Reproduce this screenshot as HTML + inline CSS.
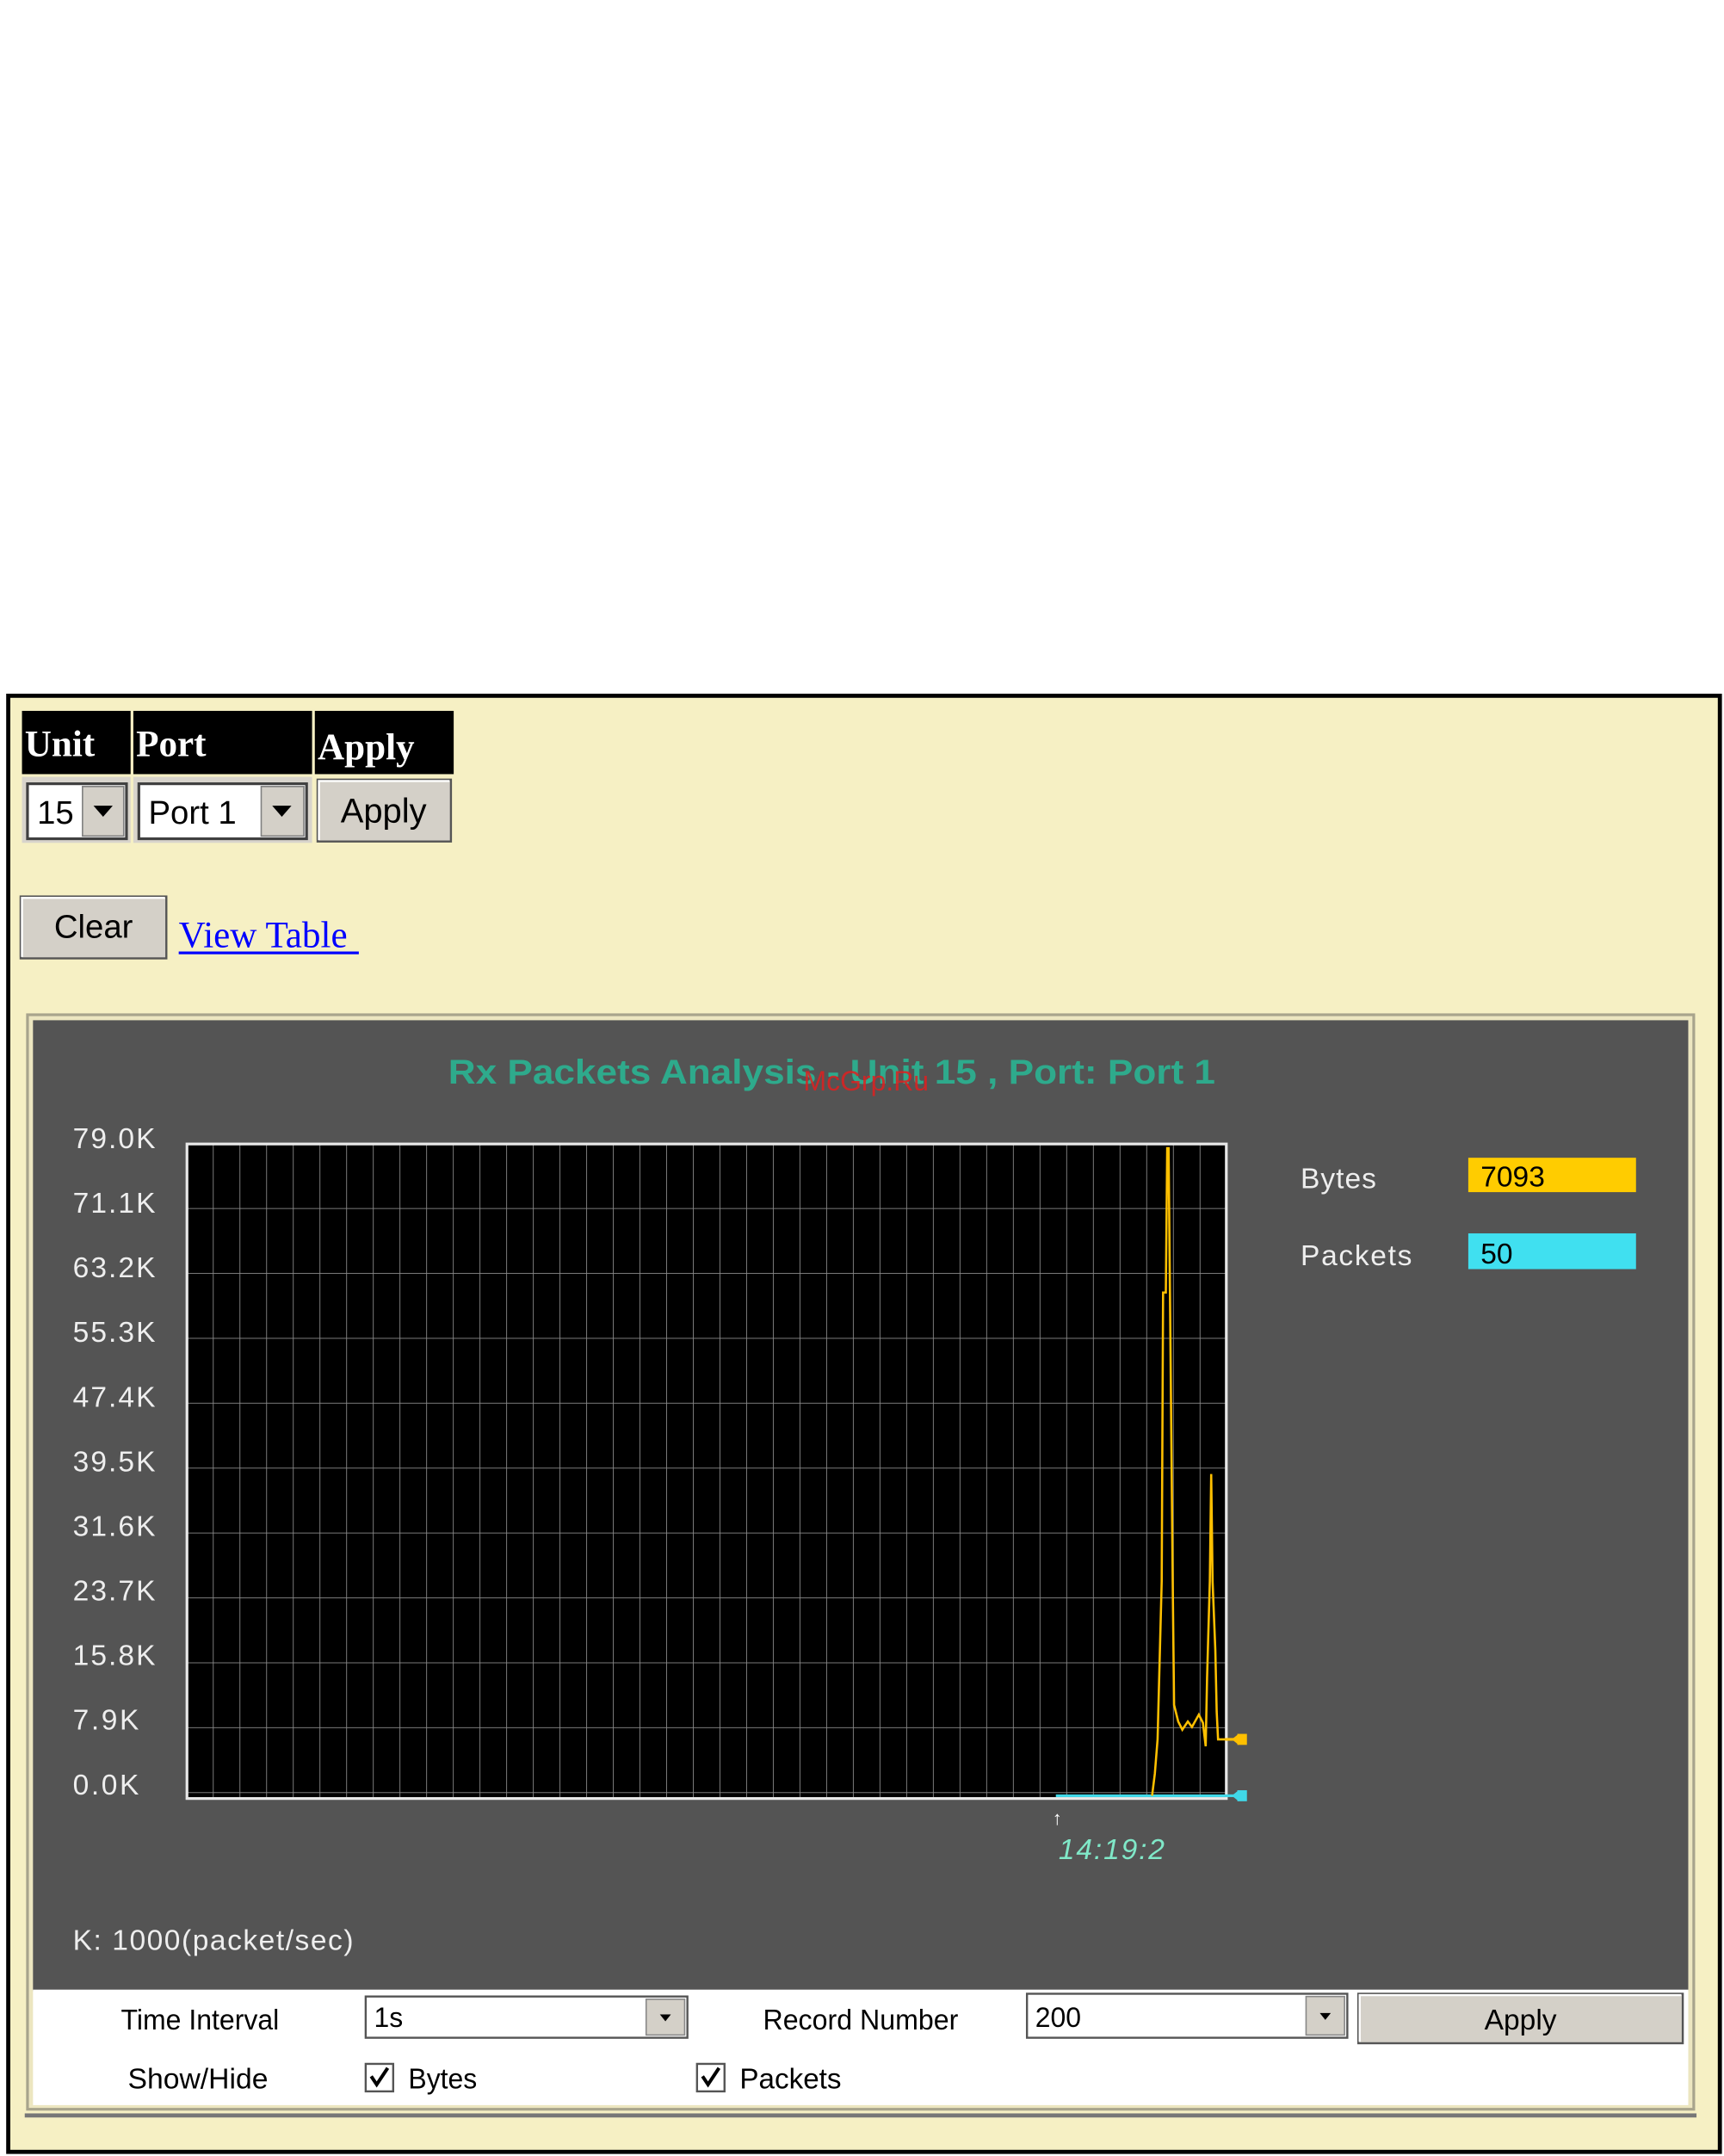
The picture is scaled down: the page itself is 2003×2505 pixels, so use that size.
<!DOCTYPE html>
<html><head><meta charset="utf-8"><style>
html,body{margin:0;padding:0;background:#fff;}
svg{display:block;}
</style></head><body>
<svg width="2003" height="2505" viewBox="0 0 1254 1568" preserveAspectRatio="none" xmlns="http://www.w3.org/2000/svg">
<defs>
<pattern id="grid" x="136" y="832" width="19.4" height="47.2" patternUnits="userSpaceOnUse">
<path d="M19.4 0V47.2M0 47.2H19.4" stroke="#8a8a8a" stroke-width="1.1" fill="none"/>
</pattern>
</defs>
<rect width="1254" height="1568" fill="#fff"/>
<rect x="6" y="506" width="1245" height="1059" fill="#f6f0c4" stroke="#000" stroke-width="3"/>
<rect x="16" y="517" width="79" height="46" fill="#000"/>
<rect x="97" y="517" width="130" height="46" fill="#000"/>
<rect x="229" y="517" width="101" height="46" fill="#000"/>
<g font-family="Liberation Serif, serif" font-weight="bold" font-size="27" fill="#fff">
<text x="18" y="550">Unit</text><text x="99" y="550">Port</text><text x="231" y="552">Apply</text>
</g>
<rect x="16" y="565" width="79" height="48" fill="#d8d4cc"/>
<rect x="97" y="565" width="130" height="48" fill="#d8d4cc"/>
<rect x="20" y="570" width="72" height="40" fill="#fff" stroke="#404040" stroke-width="2"/>
<rect x="60" y="572" width="30" height="36" fill="#d4d0c8" stroke="#808080"/>
<path d="M68 586h14l-7 8z" fill="#000"/>
<text x="27" y="599" font-family="Liberation Sans, sans-serif" font-size="24">15</text>
<rect x="101" y="570" width="122" height="40" fill="#fff" stroke="#404040" stroke-width="2"/>
<rect x="190" y="572" width="31" height="36" fill="#d4d0c8" stroke="#808080"/>
<path d="M198 586h14l-7 8z" fill="#000"/>
<text x="108" y="599" font-family="Liberation Sans, sans-serif" font-size="24">Port 1</text>
<rect x="231" y="567" width="97" height="45" fill="#d4d0c8" stroke="#555" stroke-width="1.5"/>
<path d="M232 611V568H327" stroke="#fff" fill="none" stroke-width="1.5"/>
<text x="279" y="598" text-anchor="middle" font-family="Liberation Sans, sans-serif" font-size="25">Apply</text>
<rect x="15" y="652" width="106" height="45" fill="#d4d0c8" stroke="#555" stroke-width="1.5"/>
<path d="M16 696V653H120" stroke="#fff" fill="none" stroke-width="1.5"/>
<text x="68" y="682" text-anchor="middle" font-family="Liberation Sans, sans-serif" font-size="24">Clear</text>
<text x="130" y="689" font-family="Liberation Serif, serif" font-size="27" fill="#0000ff">View Table</text>
<rect x="130" y="692" width="131" height="2" fill="#0000ff"/>
<rect x="20" y="738" width="1212" height="796" fill="#ece6c0" stroke="#a8a48c" stroke-width="2"/>
<rect x="24" y="742" width="1204" height="706" fill="#545454"/>
<rect x="24" y="1447" width="1204" height="84" fill="#fff"/>
<rect x="18" y="1537" width="1216" height="3" fill="#777"/>
<text x="326" y="788" textLength="558" lengthAdjust="spacingAndGlyphs" font-family="Liberation Sans, sans-serif" font-weight="bold" font-size="25" fill="#2eaa8c">Rx Packets Analysis - Unit 15 , Port: Port 1</text>
<text x="630" y="793" text-anchor="middle" font-family="Liberation Sans, sans-serif" font-size="20" fill="#e02020" opacity="0.85">McGrp.Ru</text>
<rect x="136" y="832" width="756" height="476" fill="#000"/>
<rect x="136" y="832" width="756" height="476" fill="url(#grid)"/>
<rect x="136" y="832" width="756" height="476" fill="none" stroke="#e8e8e8" stroke-width="2"/>
<g font-family="Liberation Sans, sans-serif" font-size="21" fill="#eee">
<g textLength="60" lengthAdjust="spacingAndGlyphs">
<text x="53" y="835" textLength="60">79.0K</text><text x="53" y="882" textLength="60">71.1K</text><text x="53" y="929" textLength="60">63.2K</text>
<text x="53" y="976" textLength="60">55.3K</text><text x="53" y="1023" textLength="60">47.4K</text><text x="53" y="1070" textLength="60">39.5K</text>
<text x="53" y="1117" textLength="60">31.6K</text><text x="53" y="1164" textLength="60">23.7K</text><text x="53" y="1211" textLength="60">15.8K</text>
<text x="53" y="1258" textLength="48">7.9K</text><text x="53" y="1305" textLength="48">0.0K</text>
</g>
<text x="53" y="1418" textLength="204">K: 1000(packet/sec)</text>
<text x="946" y="864" textLength="55">Bytes</text><text x="946" y="920" textLength="81">Packets</text>
</g>
<path d="M768 1306H891" stroke="#40d8e8" stroke-width="2" fill="none"/>
<path d="M838 1306L840 1290L842 1265L845 1150L846 940L848 940L849 835L850 835L851 940L853 1150L854 1240L857 1252L860 1258L864 1252L867 1256L872 1247L875 1253L877 1270L878 1220L880 1150L881 1072L882 1150L884 1200L885 1245L886 1265L891 1265" stroke="#ffc000" stroke-width="1.6" fill="none"/>
<path d="M891 1265H900" stroke="#ffc000" stroke-width="2"/><rect x="900" y="1261" width="7" height="8" fill="#ffc000"/><path d="M896 1265l5-4v8z" fill="#ffc000"/>
<path d="M891 1306H900" stroke="#40d8e8" stroke-width="2"/><rect x="900" y="1302" width="7" height="8" fill="#40d8e8"/><path d="M896 1306l5-4v8z" fill="#40d8e8"/>
<text x="769" y="1327" text-anchor="middle" font-family="Liberation Sans, sans-serif" font-size="14" fill="#fff">↑</text>
<text x="770" y="1352" textLength="77" font-family="Liberation Sans, sans-serif" font-style="italic" font-size="21" fill="#80e8c8">14:19:2</text>
<rect x="1068" y="842" width="122" height="25" fill="#ffcc00"/>
<rect x="1068" y="897" width="122" height="26" fill="#40e0f0"/>
<g font-family="Liberation Sans, sans-serif" font-size="21" fill="#000">
<text x="1077" y="863">7093</text><text x="1077" y="919">50</text>
</g>
<g font-family="Liberation Sans Narrow, Liberation Sans, sans-serif" font-size="21" fill="#000">
<text x="88" y="1476" textLength="115" lengthAdjust="spacingAndGlyphs">Time Interval</text>
<text x="555" y="1476" textLength="142" lengthAdjust="spacingAndGlyphs">Record Number</text>
<text x="93" y="1519" textLength="102" lengthAdjust="spacingAndGlyphs">Show/Hide</text>
<text x="297" y="1519" textLength="50" lengthAdjust="spacingAndGlyphs">Bytes</text>
<text x="538" y="1519" textLength="74" lengthAdjust="spacingAndGlyphs">Packets</text>
</g>
<rect x="266" y="1452" width="234" height="30" fill="#fff" stroke="#555" stroke-width="1.5"/>
<rect x="470" y="1454" width="28" height="26" fill="#d4d0c8" stroke="#888"/><path d="M480 1465h8l-4 5z" fill="#000"/>
<text x="272" y="1474" font-family="Liberation Sans, sans-serif" font-size="20">1s</text>
<rect x="747" y="1450" width="233" height="32" fill="#fff" stroke="#555" stroke-width="1.5"/>
<rect x="950" y="1452" width="28" height="28" fill="#d4d0c8" stroke="#888"/><path d="M960 1464h8l-4 5z" fill="#000"/>
<text x="753" y="1474" font-family="Liberation Sans, sans-serif" font-size="20">200</text>
<rect x="988" y="1450" width="236" height="36" fill="#d4d0c8" stroke="#555" stroke-width="1.5"/>
<path d="M989 1485V1451H1223" stroke="#fff" fill="none" stroke-width="1.5"/>
<text x="1106" y="1476" text-anchor="middle" font-family="Liberation Sans Narrow, Liberation Sans, sans-serif" font-size="21">Apply</text>
<rect x="266" y="1501" width="20" height="20" fill="#fff" stroke="#555" stroke-width="1.5"/>
<path d="M270 1510l4 6l8-12" stroke="#000" stroke-width="2.5" fill="none"/>
<rect x="507" y="1501" width="20" height="20" fill="#fff" stroke="#555" stroke-width="1.5"/>
<path d="M511 1510l4 6l8-12" stroke="#000" stroke-width="2.5" fill="none"/>
</svg>
</body></html>
